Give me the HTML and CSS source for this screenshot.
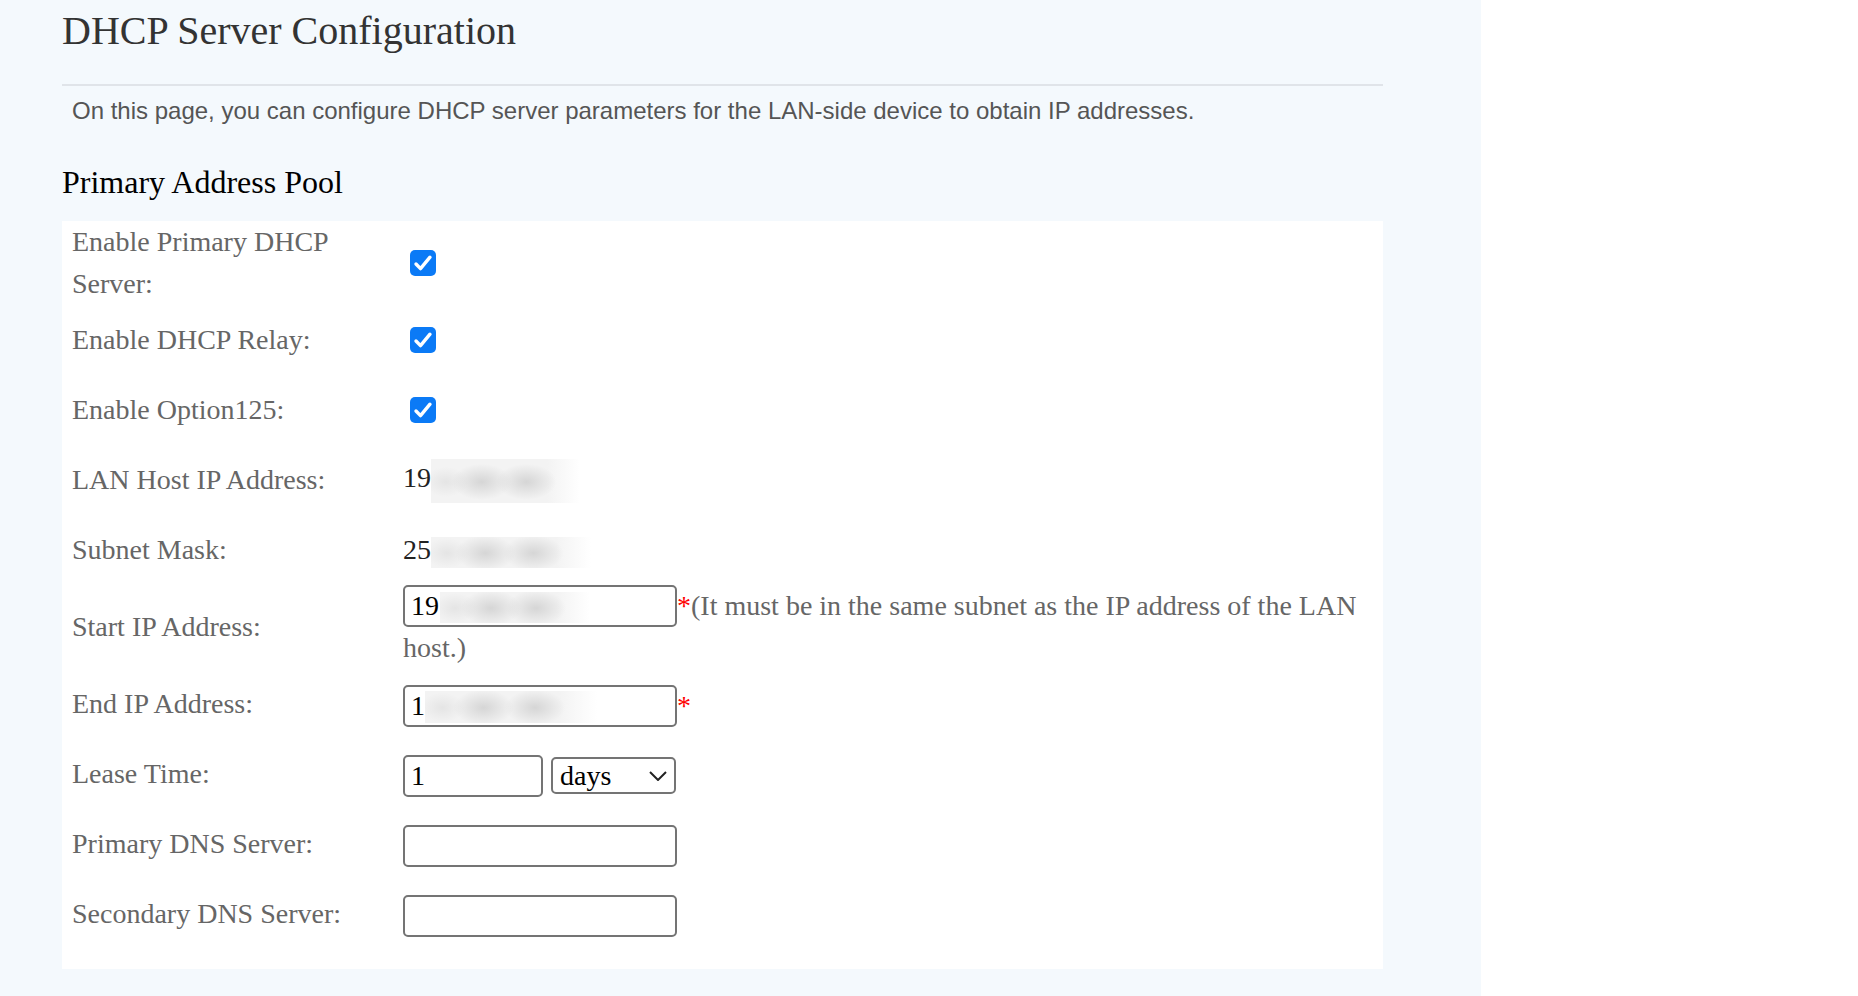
FILE: index.html
```html
<!DOCTYPE html>
<html lang="en">
<head>
<meta charset="utf-8">
<title>DHCP Server Configuration</title>
<link rel="stylesheet" href="styles.css">
</head>
<body>
<div class="page">
  <h1 class="title">DHCP Server Configuration</h1>
  <div class="rule"></div>
  <p class="desc">On this page, you can configure DHCP server parameters for the LAN-side device to obtain IP addresses.</p>
  <h2 class="section">Primary Address Pool</h2>
  <div class="card">
    <div class="row">
      <div class="label">Enable Primary DHCP Server:</div>
      <div class="value"><span class="check"><svg width="26" height="26" viewBox="0 0 26 26"><rect x="0" y="0" width="26" height="26" rx="5" fill="#0b7af6"/><path d="M6 14 L10.5 18.6 L20 7.2" fill="none" stroke="#fff" stroke-width="3.4" stroke-linecap="round" stroke-linejoin="round"/></svg></span></div>
    </div>
    <div class="row">
      <div class="label">Enable DHCP Relay:</div>
      <div class="value"><span class="check"><svg width="26" height="26" viewBox="0 0 26 26"><rect x="0" y="0" width="26" height="26" rx="5" fill="#0b7af6"/><path d="M6 14 L10.5 18.6 L20 7.2" fill="none" stroke="#fff" stroke-width="3.4" stroke-linecap="round" stroke-linejoin="round"/></svg></span></div>
    </div>
    <div class="row">
      <div class="label">Enable Option125:</div>
      <div class="value"><span class="check"><svg width="26" height="26" viewBox="0 0 26 26"><rect x="0" y="0" width="26" height="26" rx="5" fill="#0b7af6"/><path d="M6 14 L10.5 18.6 L20 7.2" fill="none" stroke="#fff" stroke-width="3.4" stroke-linecap="round" stroke-linejoin="round"/></svg></span></div>
    </div>
    <div class="row">
      <div class="label">LAN Host IP Address:</div>
      <div class="value">19<span class="blur tall"></span></div>
    </div>
    <div class="row">
      <div class="label">Subnet Mask:</div>
      <div class="value">25<span class="blur"></span></div>
    </div>
    <div class="row">
      <div class="label">Start IP Address:</div>
      <div class="value"><span class="field"><input class="inp" type="text" value="19"><span class="mask mask-start"></span></span><span class="hint"><span class="req">*</span>(It must be in the same subnet as the IP address of the LAN host.)</span></div>
    </div>
    <div class="row">
      <div class="label">End IP Address:</div>
      <div class="value field-row"><span class="field"><input class="inp" type="text" value="1"><span class="mask mask-end"></span></span><span class="req">*</span></div>
    </div>
    <div class="row">
      <div class="label">Lease Time:</div>
      <div class="value field-row lease"><input class="inp short" type="text" value="1"><span class="selwrap"><select class="sel"><option>days</option><option>hours</option><option>minutes</option></select><svg class="chev" width="18" height="10" viewBox="0 0 18 10"><path d="M1 1 L9 9 L17 1" fill="none" stroke="#222" stroke-width="2"/></svg></span></div>
    </div>
    <div class="row">
      <div class="label">Primary DNS Server:</div>
      <div class="value field-row"><span class="field"><input class="inp" type="text" value=""></span></div>
    </div>
    <div class="row">
      <div class="label">Secondary DNS Server:</div>
      <div class="value field-row"><span class="field"><input class="inp" type="text" value=""></span></div>
    </div>
  </div>
</div>
</body>
</html>
```

FILE: styles.css
```css
html, body {
  margin: 0;
  padding: 0;
  background: #ffffff;
  font-family: "Liberation Serif", "Times New Roman", serif;
}

.page {
  width: 1481px;
  min-height: 996px;
  box-sizing: border-box;
  background: #f4f9fd;
  padding: 7px 98px 0 62px;
}

.title {
  margin: 0;
  font-size: 40px;
  line-height: 48px;
  font-weight: normal;
  color: #333333;
}

.rule {
  height: 2px;
  background: #e0e4e9;
  margin-top: 29px;
}

.desc {
  margin: 7px 0 0;
  padding-left: 10px;
  font-family: "Liberation Sans", Arial, sans-serif;
  font-size: 24px;
  line-height: 36px;
  color: #555555;
}

.section {
  margin: 33px 0 0;
  font-size: 32px;
  line-height: 40px;
  font-weight: normal;
  color: #000000;
}

.card {
  margin-top: 19px;
  background: #ffffff;
  padding: 0 10px 20px;
}

.row {
  display: grid;
  grid-template-columns: 331px 1fr;
  min-height: 70px;
  align-items: center;
  font-size: 28px;
  line-height: 42px;
}

.label {
  color: #666666;
}

.value {
  color: #222222;
}

.field-row {
  padding-top: 3px;
}

.check {
  display: block;
  width: 26px;
  height: 26px;
  margin-left: 7px;
}

.check svg {
  display: block;
}

/* blurred (redacted) values */
.blur,
.mask {
  background:
    radial-gradient(ellipse 30px 18px at 34% 52%, rgba(212, 212, 212, 0.95), rgba(212, 212, 212, 0) 100%),
    radial-gradient(ellipse 30px 18px at 64% 52%, rgba(212, 212, 212, 0.95), rgba(212, 212, 212, 0) 100%),
    radial-gradient(ellipse 22px 15px at 10% 52%, rgba(225, 225, 225, 0.8), rgba(225, 225, 225, 0) 100%),
    linear-gradient(to right, #f3f3f3 0%, #f3f3f3 78%, rgba(243, 243, 243, 0) 100%);
}

.blur {
  display: inline-block;
  vertical-align: middle;
  width: 160px;
  height: 31px;
}

.blur.tall {
  width: 149px;
  height: 44px;
}

.field {
  display: inline-block;
  vertical-align: top;
  position: relative;
  height: 42px;
}

.inp {
  display: block;
  box-sizing: border-box;
  width: 274px;
  height: 42px;
  margin: 0;
  padding: 0 6px;
  border: 2px solid #747474;
  border-radius: 5px;
  background: #ffffff;
  font-family: "Liberation Serif", "Times New Roman", serif;
  font-size: 28px;
  color: #000000;
  outline: none;
}

.inp.short {
  width: 140px;
}

.mask {
  position: absolute;
}

.mask-start {
  left: 37px;
  top: 7px;
  width: 150px;
  height: 31px;
}

.mask-end {
  left: 22px;
  top: 6px;
  width: 172px;
  height: 32px;
}

.req {
  color: #ff0000;
}

.hint {
  color: #666666;
}

.lease {
  display: flex;
  align-items: center;
  gap: 8px;
}

.selwrap {
  position: relative;
  display: block;
  width: 125px;
  height: 37px;
}

.sel {
  display: block;
  box-sizing: border-box;
  width: 125px;
  height: 37px;
  margin: 0;
  padding: 0 0 0 7px;
  border: 2px solid #747474;
  border-radius: 5px;
  background: #ffffff;
  -webkit-appearance: none;
  appearance: none;
  font-family: "Liberation Serif", "Times New Roman", serif;
  font-size: 28px;
  line-height: 33px;
  color: #000000;
  outline: none;
}

.chev {
  position: absolute;
  right: 9px;
  top: 14px;
  pointer-events: none;
}
```
